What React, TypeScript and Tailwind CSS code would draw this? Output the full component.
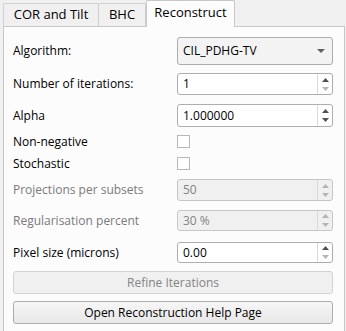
import React from 'react'

const font = { fontFamily: '"Open Sans", "Liberation Sans", sans-serif' }

const Up = ({ color }: { color: string }) => (
  <svg width="7" height="4" viewBox="0 0 7 4"><path d="M0 4 L3.5 0 L7 4 Z" fill={color} /></svg>
)
const Down = ({ color }: { color: string }) => (
  <svg width="7" height="4" viewBox="0 0 7 4"><path d="M0 0 L3.5 4 L7 0 Z" fill={color} /></svg>
)

const SpinBox: React.FC<{ value: string; disabled?: boolean; downDim?: boolean; upDim?: boolean; h: string }> = ({ value, disabled, downDim, upDim, h }) => (
  <div
    className={`flex w-[156px] ${h} rounded-[3px] border ${disabled ? 'border-[#c6c6c6] bg-[#f0f0f0] text-[#838383]' : 'border-[#adadad] bg-white text-black'}`}
  >
    <div className="flex flex-1 items-center pl-[5px]">{value}</div>
    <div className="flex w-[15px] flex-col items-center justify-center gap-[5px] border-l border-[#d9d9d9]">
      <Up color={disabled || upDim ? '#b4b4b4' : '#505050'} />
      <Down color={disabled || downDim ? '#b4b4b4' : '#505050'} />
    </div>
  </div>
)

const Row: React.FC<{ label: string; disabled?: boolean; mt: string; h: string; children: React.ReactNode }> = ({ label, disabled, mt, h, children }) => (
  <div className={`flex items-center ${mt} ${h}`}>
    <div className={`w-[164px] ${disabled ? 'text-[#7a7a7a]' : 'text-black'}`}>{label}</div>
    {children}
  </div>
)

const CheckBox = () => <div className="h-[13px] w-[13px] border border-[#b8b8b8] bg-white" />

export default function App() {
  return (
    <div className="h-[331px] w-[346px] overflow-hidden bg-[#f0f0f0] text-[12px]" style={font}>
      {/* Tabs */}
      <div className="flex h-[26px] items-end pl-[3px]">
        <div className="flex h-[23px] w-[96px] items-center justify-center rounded-t-[2px] border border-b-0 border-[#d0d0d0] bg-[#f0f0f0] text-[13px] text-black">
          COR and Tilt
        </div>
        <div className="flex h-[23px] w-[47px] items-center justify-center rounded-t-[2px] border border-b-0 border-l-0 border-[#d0d0d0] bg-[#f0f0f0] text-[13px] text-black">
          BHC
        </div>
        <div className="relative z-10 -mb-px flex h-[27px] w-[89px] items-center justify-center rounded-t-[2px] border border-b-0 border-[#c8c8c8] bg-[#fcfcfc] pb-[2px] text-[13px] text-black">
          Reconstruct
        </div>
      </div>

      {/* Panel */}
      <div className="ml-[3px] h-[310px] w-[342px] border border-[#c8c8c8] bg-[#fcfcfc] pl-[9px] pt-[10px]">
        <Row label="Algorithm:" mt="mt-0" h="h-[28px]">
          <div className="flex h-[28px] w-[156px] items-center justify-between rounded-[3px] border border-[#adadad] bg-[#f3f3f3] pl-[5px] pr-[7px]">
            <span>CIL_PDHG-TV</span>
            <svg width="8" height="4" viewBox="0 0 8 4"><path d="M0 0 L4 4 L8 0 Z" fill="#606060" /></svg>
          </div>
        </Row>
        <Row label="Number of iterations:" mt="mt-[8px]" h="h-[22px]">
          <SpinBox value="1" h="h-[22px]" downDim />
        </Row>
        <Row label="Alpha" mt="mt-[9px]" h="h-[23px]">
          <SpinBox value="1.000000" h="h-[23px]" />
        </Row>
        <Row label="Non-negative" mt="mt-[8px]" h="h-[13px]">
          <CheckBox />
        </Row>
        <Row label="Stochastic" mt="mt-[9px]" h="h-[13px]">
          <CheckBox />
        </Row>
        <Row label="Projections per subsets" disabled mt="mt-[9px]" h="h-[22px]">
          <SpinBox value="50" h="h-[22px]" disabled />
        </Row>
        <Row label="Regularisation percent" disabled mt="mt-[9px]" h="h-[21px]">
          <SpinBox value="30 %" h="h-[21px]" disabled />
        </Row>
        <Row label="Pixel size (microns)" mt="mt-[11px]" h="h-[21px]">
          <SpinBox value="0.00" h="h-[21px]" downDim />
        </Row>
        <div className="mt-[8px] flex h-[23px] w-[320px] items-center justify-center rounded-[3px] border border-[#d3d3d3] bg-[#f0f0f0] text-[#838383]">
          Refine Iterations
        </div>
        <div className="mt-[7px] flex h-[23px] w-[320px] items-center justify-center rounded-[3px] border border-[#adadad] bg-gradient-to-b from-[#f6f6f6] to-[#e8e8e8] text-black">
          Open Reconstruction Help Page
        </div>
      </div>
    </div>
  )
}
